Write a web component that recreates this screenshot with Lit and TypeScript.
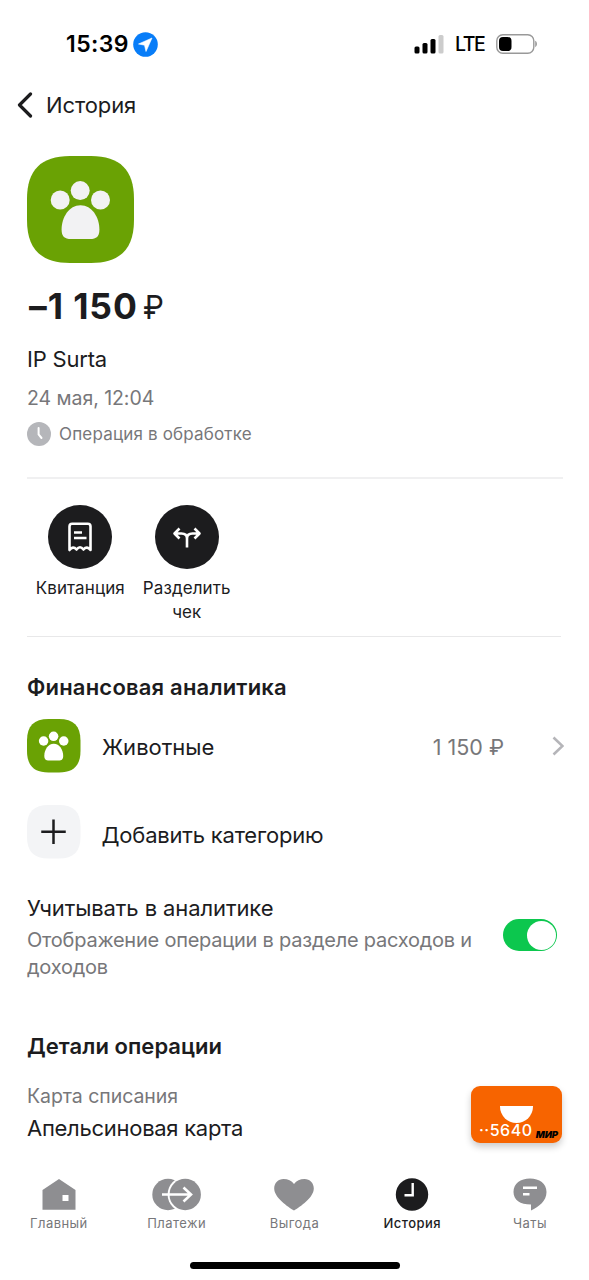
import { LitElement, html, css, svg } from "lit";
import { customElement } from "lit/decorators.js";

const paw = (fill: string) => svg`
  <path fill="#6aa204" d="M0 43C0 14 14 0 43 0H64C93 0 107 14 107 43V64C107 93 93 107 64 107H43C14 107 0 93 0 64Z"/>
  <g fill=${fill}>
    <circle cx="33.2" cy="44" r="9.5"/><circle cx="53.2" cy="34.6" r="9.5"/><circle cx="73.5" cy="44" r="9.5"/>
    <path d="M53.5 49.3C65 49.300 72.400 61.500 72.400 73.500C72.400 80.500 69.500 83 63 83H44C37.500 83 34.600 80.500 34.600 73.500C34.600 61.500 42 49.300 53.500 49.300Z"/>
  </g>`;

const tabs = [
  { cls: "main", label: "Главный", icon: svg`<path fill-rule="evenodd" d="M28 1 44.500 12V31.700H11.500V12ZM31.500 17V23H37.500V17Z"/>` },
  { cls: "pay", label: "Платежи", icon: svg`
      <circle cx="19" cy="16.500" r="15.700"/><circle cx="36.200" cy="16.500" r="17.600" fill="#fff"/><circle cx="36.200" cy="16.500" r="15.700"/>
      <path d="M13 16.500H42M34.500 9.500 42 16.500 34.500 23.500" fill="none" stroke="#fff" stroke-width="2.600"/>` },
  { cls: "perk", label: "Выгода", icon: svg`<path d="M28 32.500C22 29 8.200 19.500 8.200 10.500C8.200 5 12.200 1 17.500 1C22 1 25.500 2.800 28 6C30.500 2.800 34 1 38.500 1C43.800 1 47.800 5 47.800 10.500C47.800 19.500 34 29 28 32.500Z"/>` },
  { cls: "hist", label: "История", icon: svg`<circle cx="28" cy="16.500" r="16.200"/><path d="M28.700 5V17.200H20.500" fill="none" stroke="#fff" stroke-width="2.400"/>` },
  { cls: "chat", label: "Чаты", icon: svg`<path d="M28 .5C37.500 .5 44.500 5.500 44.500 14C44.500 23 37 28.500 29 32.500V26.500C18 26.500 11.500 22 11.500 14C11.500 5.500 18.500 .5 28 .5Z"/><path d="M21 9.800H35M21 16.300H27.500" stroke="#fff" stroke-width="2.400"/>` },
];

@customElement("app-root")
export class AppRoot extends LitElement {
  static styles = css`
    :host { display: block; font-family: Inter, "Liberation Sans", sans-serif; color: #1c1c1e; }
    * { box-sizing: border-box; }
    svg { display: block; flex: none; }
    .screen { width: 589px; height: 1280px; background: #fff; overflow: hidden; display: flex; flex-direction: column; }
    .status { height: 58px; padding: 30px 51px 0 66px; display: flex; align-items: center; color: #000; flex: none; }
    .time { font-size: 23px; font-weight: 600; line-height: 28px; letter-spacing: .4px; width: 67px; white-space: nowrap; }
    .signal { margin-left: auto; }
    .net { font-size: 19.500px; font-weight: 500; line-height: 28px; letter-spacing: -1.5px; margin: 0 11px 0 11px; width: 30px; white-space: nowrap; }
    .nav { margin-top: 33px; height: 28px; padding-left: 17px; display: flex; align-items: center; gap: 13px; flex: none; }
    .t { font-size: 22px; line-height: 28px; white-space: nowrap; }
    .nav-title { letter-spacing: -0.1px; }
    .content { padding: 37px 26px 0 27px; display: flex; flex-direction: column; flex: none; }
    .amount { margin-top: 23px; padding-left: 2px; font-size: 35.500px; line-height: 42px; font-weight: 700; display: flex; white-space: nowrap; letter-spacing: .9px; }
    .rub { font-weight: 400; font-size: 33px; margin-left: 5px; transform: scaleX(.9); transform-origin: 0 50%; }
    .merchant { margin-top: 17px; letter-spacing: -.2px; }
    .date { margin-top: 11px; font-size: 19.500px; line-height: 28px; color: #77777a; letter-spacing: -.05px; }
    .state { margin-top: 8px; display: flex; gap: 8px; align-items: center; font-size: 17px; line-height: 28px; color: #77777a; white-space: nowrap; letter-spacing: .17px; }
    .state-text { padding-top: 1px; line-height: 27px; }
    .rule { margin-top: 29px; height: 2px; background: #f0f0f1; }
    .actions { margin-top: 26px; display: flex; height: 119px; }
    .action { width: 106.500px; display: flex; flex-direction: column; align-items: center; gap: 7px; font-size: 17px; line-height: 24px; text-align: center; letter-spacing: .1px; }
    .round { width: 64px; height: 64px; border-radius: 50%; background: #1c1c1e; display: grid; place-items: center; }
    .thin { margin-top: 12px; margin-right: 2px; height: 1px; background: #e8e8e9; }
    .h { font-size: 22px; line-height: 28px; font-weight: 600; white-space: nowrap; }
    .h-fin { margin-top: 36px; letter-spacing: .2px; }
    .row { display: flex; align-items: center; height: 54px; }
    .row-cat { margin-top: 18px; margin-right: -1px; }
    .row-add { margin-top: 32px; }
    .row .t { margin-left: 21.500px; }
    .row-cat .t { padding-top: 2px; }
    .row .sum { margin-left: auto; color: #77777a; font-size: 21.500px; }
    .row .chev { margin-left: 48px; }
    .row-add .t { padding-top: 5px; margin-left: 21px; letter-spacing: -.2px; }
    .cons { letter-spacing: -.1px; }
    .consider { margin-top: 35px; display: flex; justify-content: space-between; }
    .desc { margin-top: 5px; font-size: 20px; line-height: 27px; color: #77777a; width: 460px; letter-spacing: -.23px; }
    .toggle { width: 54px; height: 32px; border-radius: 16px; background: #0cc74e; margin: 25px 6px 0 0; padding: 1.500px; display: flex; justify-content: flex-end; flex: none; }
    .knob { width: 29px; height: 29px; border-radius: 50%; background: #fff; }
    .h-det { margin-top: 51px; letter-spacing: .05px; }
    .card-row { margin-top: 21px; display: flex; justify-content: space-between; padding-right: 1px; }
    .hint { font-size: 19.500px; line-height: 28px; color: #77777a; padding-top: .5px; letter-spacing: -.05px; }
    .card-name { margin-top: 4px; letter-spacing: -.28px; }
    .card { width: 91px; height: 57px; margin-top: 5px; border-radius: 9px; background: #f76400; box-shadow: 0 4px 7px #0003; display: flex; flex-direction: column; align-items: center; flex: none; }
    .bowl { width: 33px; height: 17px; border-radius: 0 0 17px 17px; background: #fff; margin-top: 19.500px; flex: none; }
    .card-line { width: 91px; display: flex; justify-content: space-between; padding: 0 4px 0 8px; height: 17px; margin-top: -1px; color: #fff; font-size: 16px; line-height: 17px; font-weight: 500; letter-spacing: .5px; white-space: nowrap; }
    .mir { color: #000; font-size: 9.500px; font-style: italic; font-weight: 900; line-height: 25px; letter-spacing: -.1px; }
    .tabs { margin-top: 35px; display: flex; flex: none; height: 84px; }
    .tab { width: 117.800px; display: flex; flex-direction: column; align-items: center; gap: 3px; font-size: 13px; line-height: 18px; color: #77777a; letter-spacing: .45px; }
    .tab svg { fill: #8e8e91; }
    .hist { color: #1c1c1e; font-weight: 500; }
    .hist svg { fill: #1c1c1e; }
    .home { width: 210px; height: 7px; border-radius: 4px; background: #000; margin-left: 190px; flex: none; }
  `;

  render() {
    return html`<div class="screen">
      <div class="status">
        <span class="time">15:39</span>
        <svg width="25" height="25" viewBox="0 0 25 25"><circle cx="12.500" cy="12.500" r="12.300" fill="#087df8"/><path d="M19 6 5.500 12 11.500 13.200 13 19.500Z" fill="#fff" stroke="#fff" stroke-width=".6" stroke-linejoin="round"/></svg>
        <svg class="signal" width="30" height="19" viewBox="0 0 30 19"><rect x=".5" y="11.500" width="5" height="7" rx="1.500"/><rect x="8.500" y="8" width="5" height="10.500" rx="1.500"/><rect x="16.500" y="4" width="5" height="14.500" rx="1.500"/><rect x="24.500" y="0" width="5" height="18.500" rx="1.500" fill="#ccc"/></svg>
        <span class="net">LTE</span>
        <svg width="42" height="20" viewBox="0 0 42 20"><rect x=".8" y=".8" width="37" height="18.400" rx="6" fill="none" stroke="#999" stroke-width="1.400"/><rect x="3" y="3" width="12.500" height="14" rx="4"/><path d="M39.300 6.800C41.300 8 41.300 12 39.300 13.200Z" fill="#888"/></svg>
      </div>
      <div class="nav">
        <svg width="16" height="26" viewBox="0 0 16 26"><path d="M13.500 2 2.500 13 13.500 24" fill="none" stroke="#1c1c1e" stroke-width="3.200" stroke-linecap="round" stroke-linejoin="round"/></svg>
        <span class="t nav-title">История</span>
      </div>
      <div class="content">
        <svg width="107" height="107" viewBox="0 0 107 107">${paw("#f2f2f3")}</svg>
        <div class="amount"><span class="amount-num">–1 150</span><span class="rub">₽</span></div>
        <div class="t merchant">IP Surta</div>
        <div class="date">24 мая, 12:04</div>
        <div class="state">
          <svg width="24" height="24" viewBox="0 0 24 24"><circle cx="12" cy="12" r="12" fill="#b5b6ba"/><path d="M11.600 6V12.500L14.500 16" fill="none" stroke="#fff" stroke-width="2" stroke-linecap="round"/></svg>
          <span class="state-text">Операция в обработке</span>
        </div>
        <div class="rule"></div>
        <div class="actions">
          <div class="action"><div class="round"><svg width="26" height="30" viewBox="0 0 26 30" fill="none" stroke="#fff" stroke-width="2.600"><path d="M2.500 28V4.500Q2.500 1.800 5.200 1.800H20.800Q23.500 1.800 23.500 4.500V28Q20 23.500 16.500 27.500Q13 23 9.500 27.500Q6 23.500 2.500 28Z" stroke-linejoin="round"/><path d="M7 10.500H15M7 16H19.500"/></svg></div><span class="lb1">Квитанция</span></div>
          <div class="action"><div class="round"><svg width="30" height="24" viewBox="0 0 30 24" fill="none" stroke="#fff" stroke-width="2.600" stroke-linejoin="round"><path d="M15 22.500V13.500Q15 8.500 9.500 8.500H2.500M15 13.500Q15 8.500 20.500 8.500H27.500M7.500 3.500 2.500 8.500 7.500 13.500M22.500 3.500 27.500 8.500 22.500 13.500"/></svg></div><span class="lb2">Разделить<br>чек</span></div>
        </div>
        <div class="thin"></div>
        <div class="h h-fin">Финансовая аналитика</div>
        <div class="row row-cat">
          <svg width="53.500" height="53.500" viewBox="0 0 107 107">${paw("#fff")}</svg>
          <span class="t cat">Животные</span><span class="t sum">1 150 ₽</span>
          <svg class="chev" width="12" height="20" viewBox="0 0 12 20"><path d="M1.500 1.500 10.500 10 1.500 18.500" fill="none" stroke="#b5b5b9" stroke-width="2.600"/></svg>
        </div>
        <div class="row row-add">
          <svg width="53.500" height="53.500" viewBox="0 0 107 107"><path fill="#f3f4f6" d="M0 43C0 14 14 0 43 0H64C93 0 107 14 107 43V64C107 93 93 107 64 107H43C14 107 0 93 0 64Z"/><path d="M53 29V78M28.500 53.500H77.500" stroke="#1c1c1e" stroke-width="5"/></svg>
          <span class="t add">Добавить категорию</span>
        </div>
        <div class="consider">
          <div><div class="t cons">Учитывать в аналитике</div><div class="desc">Отображение операции в разделе расходов и доходов</div></div>
          <div class="toggle"><div class="knob"></div></div>
        </div>
        <div class="h h-det">Детали операции</div>
        <div class="card-row">
          <div><div class="hint">Карта списания</div><div class="t card-name">Апельсиновая карта</div></div>
          <div class="card"><div class="bowl"></div><div class="card-line"><span>··5640</span><span class="mir">МИР</span></div></div>
        </div>
      </div>
      <div class="tabs">${tabs.map(t => html`<div class="tab ${t.cls}"><svg width="56" height="33" viewBox="0 0 56 33">${t.icon}</svg><span>${t.label}</span></div>`)}</div>
      <div class="home"></div>
    </div>`;
  }
}
